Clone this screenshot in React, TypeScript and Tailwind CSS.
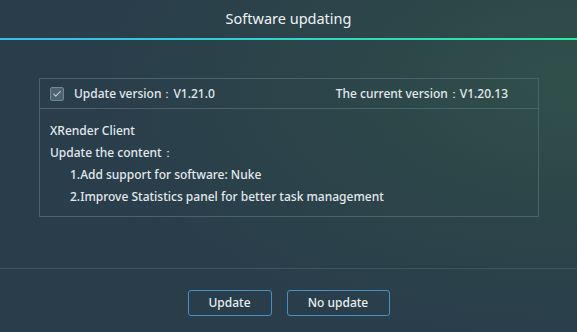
import { Check } from "lucide-react";

const font = { fontFamily: '"Noto Sans", "Open Sans", sans-serif' };

export default function App() {
  return (
    <div
      style={font}
      className="relative flex h-[332px] w-[577px] flex-col overflow-hidden bg-[radial-gradient(ellipse_90%_85%_at_100%_25%,#30504a_0%,#2c4549_45%,#293d4b_100%)] text-[#e3e9ec]"
    >
      <div className="flex h-[38px] items-center justify-center text-[14.5px] text-[#eef2f4]">
        Software updating
      </div>
      <div className="h-[2px] bg-gradient-to-r from-[#3bbcec] to-[#2ee9a0]" />

      <div className="flex flex-1 flex-col pt-[38px]">
        <div className="mx-[39px] h-[139px] w-[500px] border border-[#4b626b]">
          <div className="flex h-[30px] items-center border-b border-[#4b626b] pl-[10px] pr-[30px] text-[12px] font-medium">
            <span className="flex h-[14px] w-[14px] items-center justify-center rounded-[2px] border border-[#6f8891] bg-[#4c6470]">
              <Check size={10} strokeWidth={2.5} className="text-[#c8d4da]" />
            </span>
            <span className="ml-[10px]">Update version：V1.21.0</span>
            <span className="ml-auto">The current version：V1.20.13</span>
          </div>
          <div className="flex flex-col px-[10px] pt-[11px] text-[12px] font-medium leading-[22px]">
            <span>XRender Client</span>
            <span>Update the content：</span>
            <span className="pl-[20px]">1.Add support for software: Nuke</span>
            <span className="pl-[20px]">2.Improve Statistics panel for better task management</span>
          </div>
        </div>
      </div>

      <div className="flex h-[64px] items-start justify-center gap-[15px] border-t border-[#3e5561] pt-[21px]">
        <button className="h-[26px] w-[84px] rounded-[3px] border border-[#4a90c2] text-[12px] font-medium text-[#e8eef1]">
          Update
        </button>
        <button className="h-[26px] w-[103px] rounded-[3px] border border-[#4a90c2] text-[12px] font-medium text-[#e8eef1]">
          No update
        </button>
      </div>
    </div>
  );
}
